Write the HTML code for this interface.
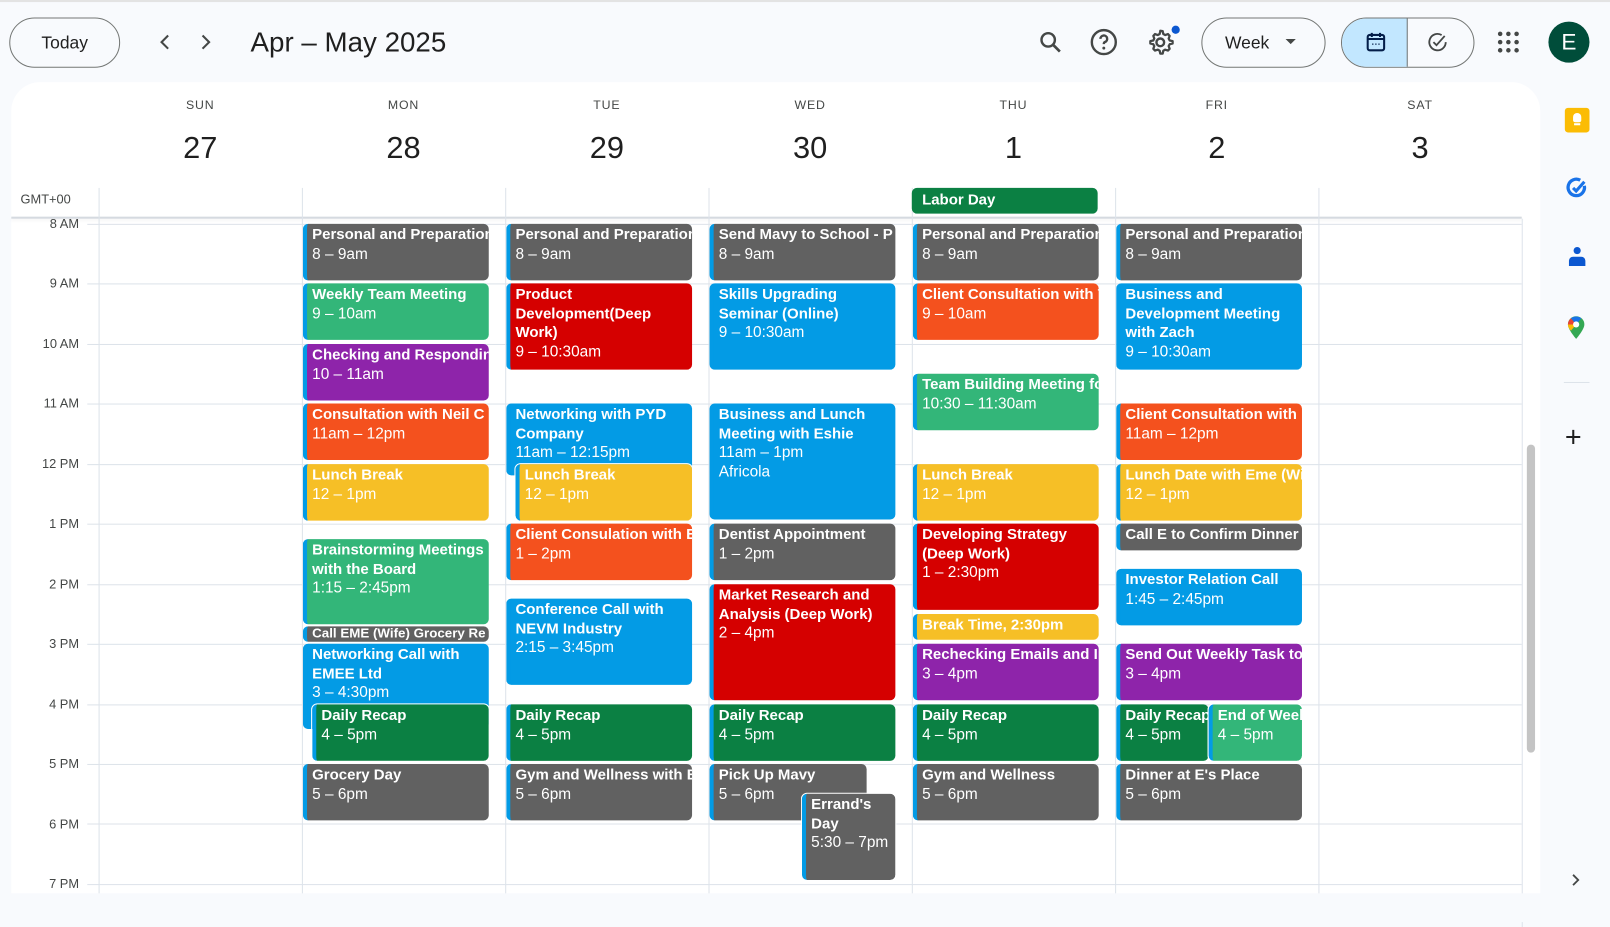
<!DOCTYPE html>
<html><head><meta charset="utf-8"><style>
*{margin:0;padding:0;box-sizing:border-box}
body{width:1610px;height:898px;overflow:hidden;background:#f8fafd;font-family:"Liberation Sans",sans-serif;position:relative;color:#1f1f1f}
#wrap{position:absolute;left:0;top:0;width:1568px;height:875px;transform:scale(1.0268);transform-origin:0 0}
.abs{position:absolute}
.card{position:absolute;left:11px;top:80px;width:1489px;height:790px;background:#fff;border-radius:28px 28px 0 0}
.dn{position:absolute;top:95px;width:198px;text-align:center;font-size:12px;letter-spacing:.8px;color:#444746}
.dd{position:absolute;top:128px;width:198px;text-align:center;font-size:30px;color:#1f1f1f}
.vl{position:absolute;top:183px;width:1px;height:690px;background:#dde3ea}
.hl{position:absolute;left:96px;width:1386px;height:1px;background:#dde3ea}
.hr{position:absolute;left:14px;width:63px;text-align:right;font-size:12.5px;color:#444746}
.e{position:absolute;border-radius:5px;border-left:4px solid #039be5;color:#fff;font-size:15px;line-height:18.5px;padding:2px 0 0 5px;overflow:hidden}
.e b{display:block;font-weight:bold;font-size:14.6px}
.n b{white-space:nowrap}
.w{outline:1px solid #fff}
.g{background:#616161}.s{background:#33b679}.p{background:#8e24aa}.t{background:#f4511e}.y{background:#f6bf26}.bl{background:#039be5}.r{background:#d50000}.k{background:#0b8043}
.ic{position:absolute}
</style></head><body><div id="wrap">
<div class="abs" style="left:0;top:0;width:1610px;height:2px;background:#e3e3e3"></div>
<div class="abs" style="left:9px;top:17px;width:108px;height:49px;border:1px solid #747775;border-radius:25px;font-size:17px;text-align:center;line-height:47px">Today</div>
<svg class="ic" style="left:150px;top:30px" width="22" height="22" viewBox="0 0 24 24"><path d="M15 5l-7 7 7 7" fill="none" stroke="#444746" stroke-width="2.2"/></svg>
<svg class="ic" style="left:189px;top:30px" width="22" height="22" viewBox="0 0 24 24"><path d="M9 5l7 7-7 7" fill="none" stroke="#444746" stroke-width="2.2"/></svg>
<div class="abs" style="left:244px;top:26px;font-size:27px;color:#1f1f1f">Apr – May 2025</div>
<svg class="ic" style="left:1010px;top:28px" width="26" height="26" viewBox="0 0 24 24"><circle cx="10" cy="10" r="6" fill="none" stroke="#444746" stroke-width="2.2"/><path d="M14.5 14.5l6 6" stroke="#444746" stroke-width="2.4"/></svg>
<svg class="ic" style="left:1061px;top:27px" width="28" height="28" viewBox="0 0 24 24"><circle cx="12" cy="12" r="10" fill="none" stroke="#444746" stroke-width="2"/><path d="M9.2 9.3a2.8 2.8 0 1 1 3.8 2.6c-.8.4-1 .9-1 1.8" fill="none" stroke="#444746" stroke-width="2"/><circle cx="12" cy="17" r="1.2" fill="#444746"/></svg>
<svg class="ic" style="left:1116px;top:27px" width="28" height="28" viewBox="0 0 24 24"><path d="M12 2.5l2 .3.5 2.4 1.6.9 2.3-.8 1.4 1.5-.8 2.3.9 1.6 2.4.5v2l-2.4.5-.9 1.6.8 2.3-1.4 1.5-2.3-.8-1.6.9-.5 2.4h-2l-.5-2.4-1.600-.9-2.3.8-1.4-1.5.8-2.3-.9-1.6-2.4-.5v-2l2.4-.5.9-1.6-.8-2.3 1.4-1.5 2.3.8 1.6-.9.5-2.4z" fill="none" stroke="#444746" stroke-width="1.9" stroke-linejoin="round"/><circle cx="12" cy="12.2" r="3.2" fill="none" stroke="#444746" stroke-width="2"/></svg>
<div class="abs" style="left:1141px;top:25px;width:8px;height:8px;border-radius:50%;background:#0b57d0"></div>
<div class="abs" style="left:1170px;top:17px;width:121px;height:49px;border:1px solid #747775;border-radius:25px;font-size:17px;line-height:47px;padding-left:22px">Week</div>
<div class="abs" style="left:1252px;top:38px;width:0;height:0;border-left:5px solid transparent;border-right:5px solid transparent;border-top:5px solid #444746"></div>
<div class="abs" style="left:1306px;top:17px;width:130px;height:49px;border:1px solid #747775;border-radius:25px;overflow:hidden"><div style="position:absolute;left:0;top:0;width:64px;height:49px;background:#c2e7ff;border-right:1px solid #747775"></div></div>
<svg class="ic" style="left:1328px;top:29px" width="24" height="24" viewBox="0 0 24 24"><rect x="4" y="5" width="16" height="15" rx="2" fill="none" stroke="#041e49" stroke-width="2"/><path d="M4 9h16M8 3v4M16 3v4" stroke="#041e49" stroke-width="2"/><path d="M8.5 14h1M11.5 14h1M14.5 14h1" stroke="#041e49" stroke-width="1.6"/></svg>
<svg class="ic" style="left:1388px;top:29px" width="24" height="24" viewBox="0 0 24 24"><path d="M20 12a8 8 0 1 1-4-6.9" fill="none" stroke="#444746" stroke-width="1.8"/><path d="M8 12l3 3 8-9" fill="none" stroke="#444746" stroke-width="1.8"/></svg>
<svg class="ic" style="left:1458px;top:30px" width="22" height="22" viewBox="0 0 22 22" fill="#444746"><circle cx="3" cy="3" r="2.2"/><circle cx="11" cy="3" r="2.2"/><circle cx="19" cy="3" r="2.2"/><circle cx="3" cy="11" r="2.2"/><circle cx="11" cy="11" r="2.2"/><circle cx="19" cy="11" r="2.2"/><circle cx="3" cy="19" r="2.2"/><circle cx="11" cy="19" r="2.2"/><circle cx="19" cy="19" r="2.2"/></svg>
<div class="abs" style="left:1508px;top:21px;width:40px;height:40px;border-radius:50%;background:#004d3a;color:#fff;font-size:22px;text-align:center;line-height:40px">E</div>

<div class="abs" style="left:1524px;top:105px;width:24px;height:24px;border-radius:3px;background:#fbbc04"></div>
<div class="abs" style="left:1532px;top:110px;width:8px;height:9px;border-radius:4px 4px 2px 2px;background:#fff"></div>
<div class="abs" style="left:1533px;top:120px;width:6px;height:2px;background:#fff"></div>
<svg class="ic" style="left:1524px;top:171px" width="24" height="24" viewBox="0 0 24 24"><path d="M19 10a8 8 0 1 1-4-5.5" fill="none" stroke="#1a73e8" stroke-width="3.2"/><path d="M8 12l3 3 8-9" fill="none" stroke="#1a73e8" stroke-width="3"/></svg>
<svg class="ic" style="left:1526px;top:239px" width="20" height="22" viewBox="0 0 20 22"><circle cx="10" cy="5" r="3.5" fill="#0b57d0"/><path d="M2 20v-5a4 4 0 0 1 4-4h8a4 4 0 0 1 4 4v5z" fill="#0b57d0"/></svg>
<svg class="ic" style="left:1526px;top:307px" width="18" height="24" viewBox="0 0 18 24"><path d="M9 1a8 8 0 0 0-8 8c0 5 8 14 8 14s8-9 8-14a8 8 0 0 0-8-8z" fill="#34a853"/><path d="M1 9a8 8 0 0 1 3-6l5 6z" fill="#ea4335"/><path d="M4 3a8 8 0 0 1 10 0l-5 6z" fill="#1a73e8"/><path d="M1 9l8 0-5 6C2 13 1 11 1 9z" fill="#fbbc04"/><circle cx="9" cy="9" r="3" fill="#fff"/></svg>
<div class="abs" style="left:1523px;top:372px;width:25px;height:1px;background:#dde3ea"></div>
<div class="abs" style="left:1524px;top:411px;font-size:28px;color:#1f1f1f;line-height:30px">+</div>
<svg class="ic" style="left:1528px;top:850px" width="14" height="14" viewBox="0 0 14 14"><path d="M4 2l5 5-5 5" fill="none" stroke="#444746" stroke-width="1.8"/></svg>

<div class="card"></div>
<div class="abs" style="left:1487px;top:433px;width:8px;height:300px;border-radius:4px;background:#c4c4c4"></div>

<div class="dn" style="left:96px">SUN</div><div class="dd" style="left:96px">27</div>
<div class="dn" style="left:294px">MON</div><div class="dd" style="left:294px">28</div>
<div class="dn" style="left:492px">TUE</div><div class="dd" style="left:492px">29</div>
<div class="dn" style="left:690px">WED</div><div class="dd" style="left:690px">30</div>
<div class="dn" style="left:888px">THU</div><div class="dd" style="left:888px">1</div>
<div class="dn" style="left:1086px">FRI</div><div class="dd" style="left:1086px">2</div>
<div class="dn" style="left:1284px">SAT</div><div class="dd" style="left:1284px">3</div>

<div class="abs" style="left:20px;top:187px;font-size:12.5px;color:#444746">GMT+00</div>
<div class="abs" style="left:11px;top:211px;width:1471px;height:2px;background:#d5dae0;box-shadow:0 2px 3px rgba(0,0,0,.06)"></div>

<div class="vl" style="left:96px"></div><div class="vl" style="left:294px"></div><div class="vl" style="left:492px"></div><div class="vl" style="left:690px"></div><div class="vl" style="left:888px"></div><div class="vl" style="left:1086px"></div><div class="vl" style="left:1284px"></div><div class="vl" style="left:1482px;top:213px"></div>

<div class="hl" style="top:218px;left:85px;width:1397px"></div><div class="hr" style="top:211px">8 AM</div>
<div class="hl" style="top:276px;left:85px;width:1397px"></div><div class="hr" style="top:269px">9 AM</div>
<div class="hl" style="top:335px;left:85px;width:1397px"></div><div class="hr" style="top:328px">10 AM</div>
<div class="hl" style="top:393px;left:85px;width:1397px"></div><div class="hr" style="top:386px">11 AM</div>
<div class="hl" style="top:452px;left:85px;width:1397px"></div><div class="hr" style="top:445px">12 PM</div>
<div class="hl" style="top:510px;left:85px;width:1397px"></div><div class="hr" style="top:503px">1 PM</div>
<div class="hl" style="top:569px;left:85px;width:1397px"></div><div class="hr" style="top:562px">2 PM</div>
<div class="hl" style="top:627px;left:85px;width:1397px"></div><div class="hr" style="top:620px">3 PM</div>
<div class="hl" style="top:686px;left:85px;width:1397px"></div><div class="hr" style="top:679px">4 PM</div>
<div class="hl" style="top:744px;left:85px;width:1397px"></div><div class="hr" style="top:737px">5 PM</div>
<div class="hl" style="top:802px;left:85px;width:1397px"></div><div class="hr" style="top:796px">6 PM</div>
<div class="hl" style="top:861px;left:85px;width:1397px"></div><div class="hr" style="top:854px">7 PM</div>
<div class="abs" style="left:0;top:870px;width:1505px;height:28px;background:#f8fafd"></div>

<div class="abs" style="left:888px;top:183px;width:181px;height:25px;border-radius:5px;background:#0b8043;color:#fff;font-weight:bold;font-size:14.6px;line-height:25px;padding-left:10px">Labor Day</div>

<div class="e g n" style="left:295px;top:218px;width:181px;height:55px"><b>Personal and Preparation</b>8 – 9am</div>
<div class="e s n" style="left:295px;top:276px;width:181px;height:55px"><b>Weekly Team Meeting</b>9 – 10am</div>
<div class="e p n" style="left:295px;top:335px;width:181px;height:55px"><b>Checking and Responding</b>10 – 11am</div>
<div class="e t n" style="left:295px;top:393px;width:181px;height:55px"><b>Consultation with Neil C</b>11am – 12pm</div>
<div class="e y n" style="left:295px;top:452px;width:181px;height:55px"><b>Lunch Break</b>12 – 1pm</div>
<div class="e s" style="left:295px;top:525px;width:181px;height:83px"><b>Brainstorming Meetings with the Board</b>1:15 – 2:45pm</div>
<div class="e g n" style="left:295px;top:610px;width:181px;height:15px;line-height:14px;padding-top:0"><b style="font-size:13px">Call EME (Wife) Grocery Re</b></div>
<div class="e bl" style="left:295px;top:627px;width:181px;height:83px"><b>Networking Call with EMEE Ltd</b>3 – 4:30pm</div>
<div class="e k n w" style="left:304px;top:686px;width:172px;height:55px"><b>Daily Recap</b>4 – 5pm</div>
<div class="e g n" style="left:295px;top:744px;width:181px;height:55px"><b>Grocery Day</b>5 – 6pm</div>

<div class="e g n" style="left:493px;top:218px;width:181px;height:55px"><b>Personal and Preparation</b>8 – 9am</div>
<div class="e r" style="left:493px;top:276px;width:181px;height:84px"><b>Product Development(Deep Work)</b>9 – 10:30am</div>
<div class="e bl" style="left:493px;top:393px;width:181px;height:70px"><b>Networking with PYD Company</b>11am – 12:15pm</div>
<div class="e y n w" style="left:502px;top:452px;width:172px;height:55px"><b>Lunch Break</b>12 – 1pm</div>
<div class="e t n" style="left:493px;top:510px;width:181px;height:55px"><b>Client Consulation with E</b>1 – 2pm</div>
<div class="e bl" style="left:493px;top:583px;width:181px;height:84px"><b>Conference Call with NEVM Industry</b>2:15 – 3:45pm</div>
<div class="e k n" style="left:493px;top:686px;width:181px;height:55px"><b>Daily Recap</b>4 – 5pm</div>
<div class="e g n" style="left:493px;top:744px;width:181px;height:55px"><b>Gym and Wellness with E</b>5 – 6pm</div>

<div class="e g n" style="left:691px;top:218px;width:181px;height:55px"><b>Send Mavy to School - P</b>8 – 9am</div>
<div class="e bl" style="left:691px;top:276px;width:181px;height:84px"><b>Skills Upgrading Seminar (Online)</b>9 – 10:30am</div>
<div class="e bl" style="left:691px;top:393px;width:181px;height:113px"><b>Business and Lunch Meeting with Eshie</b>11am – 1pm<br>Africola</div>
<div class="e g n" style="left:691px;top:510px;width:181px;height:55px"><b>Dentist Appointment</b>1 – 2pm</div>
<div class="e r" style="left:691px;top:569px;width:181px;height:113px"><b>Market Research and Analysis (Deep Work)</b>2 – 4pm</div>
<div class="e k n" style="left:691px;top:686px;width:181px;height:55px"><b>Daily Recap</b>4 – 5pm</div>
<div class="e g n" style="left:691px;top:744px;width:153px;height:55px"><b>Pick Up Mavy</b>5 – 6pm</div>
<div class="e g w" style="left:781px;top:773px;width:91px;height:84px"><b>Errand's Day</b>5:30 – 7pm</div>

<div class="e g n" style="left:889px;top:218px;width:181px;height:55px"><b>Personal and Preparation</b>8 – 9am</div>
<div class="e t n" style="left:889px;top:276px;width:181px;height:55px"><b>Client Consultation with T</b>9 – 10am</div>
<div class="e s n" style="left:889px;top:364px;width:181px;height:55px"><b>Team Building Meeting fo</b>10:30 – 11:30am</div>
<div class="e y n" style="left:889px;top:452px;width:181px;height:55px"><b>Lunch Break</b>12 – 1pm</div>
<div class="e r" style="left:889px;top:510px;width:181px;height:84px"><b>Developing Strategy (Deep Work)</b>1 – 2:30pm</div>
<div class="e y n" style="left:889px;top:598px;width:181px;height:25px"><b>Break Time, 2:30pm</b></div>
<div class="e p n" style="left:889px;top:627px;width:181px;height:55px"><b>Rechecking Emails and In</b>3 – 4pm</div>
<div class="e k n" style="left:889px;top:686px;width:181px;height:55px"><b>Daily Recap</b>4 – 5pm</div>
<div class="e g n" style="left:889px;top:744px;width:181px;height:55px"><b>Gym and Wellness</b>5 – 6pm</div>

<div class="e g n" style="left:1087px;top:218px;width:181px;height:55px"><b>Personal and Preparation</b>8 – 9am</div>
<div class="e bl" style="left:1087px;top:276px;width:181px;height:84px"><b>Business and Development Meeting with Zach</b>9 – 10:30am</div>
<div class="e t n" style="left:1087px;top:393px;width:181px;height:55px"><b>Client Consultation with I</b>11am – 12pm</div>
<div class="e y n" style="left:1087px;top:452px;width:181px;height:55px"><b>Lunch Date with Eme (Wi</b>12 – 1pm</div>
<div class="e g n" style="left:1087px;top:510px;width:181px;height:26px"><b>Call E to Confirm Dinner T</b></div>
<div class="e bl n" style="left:1087px;top:554px;width:181px;height:55px"><b>Investor Relation Call</b>1:45 – 2:45pm</div>
<div class="e p n" style="left:1087px;top:627px;width:181px;height:55px"><b>Send Out Weekly Task to</b>3 – 4pm</div>
<div class="e k n" style="left:1087px;top:686px;width:90px;height:55px"><b>Daily Recap</b>4 – 5pm</div>
<div class="e s n w" style="left:1177px;top:686px;width:91px;height:55px"><b>End of Week</b>4 – 5pm</div>
<div class="e g n" style="left:1087px;top:744px;width:181px;height:55px"><b>Dinner at E's Place</b>5 – 6pm</div>
</div></body></html>
